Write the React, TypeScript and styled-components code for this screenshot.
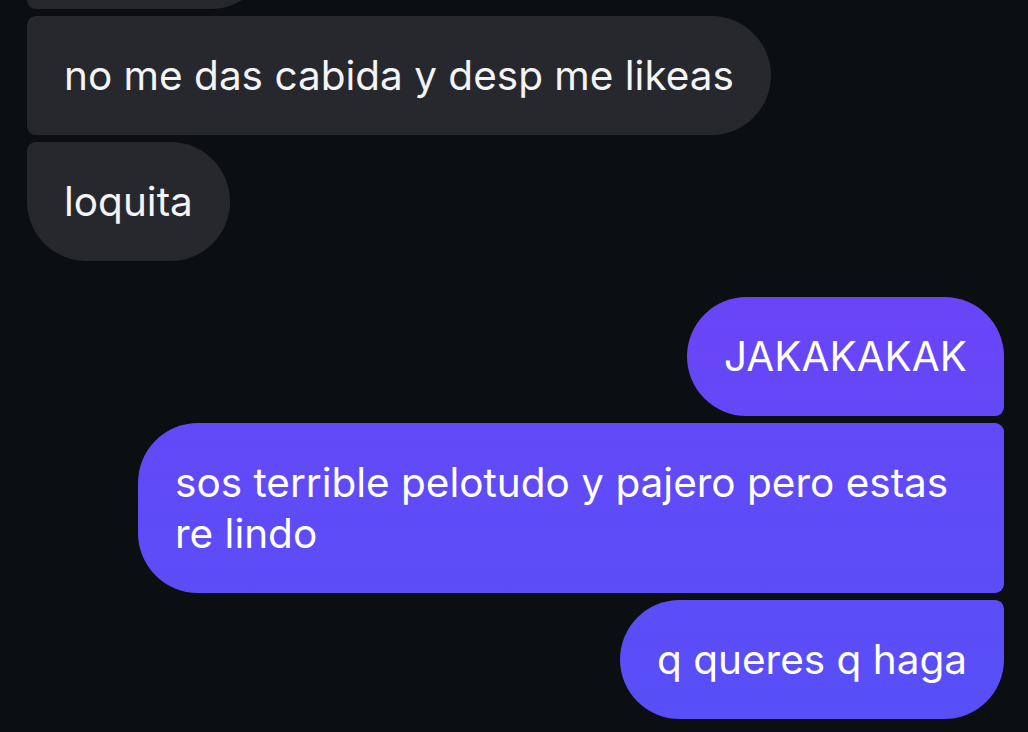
import React from 'react';
import styled, { createGlobalStyle, css } from 'styled-components';

const Global = createGlobalStyle`
  html, body {
    margin: 0;
    padding: 0;
    background: #0c0f12;
    overflow: hidden;
  }
  body {
    font-family: Inter, "Noto Sans", "Liberation Sans", sans-serif;
    -webkit-font-smoothing: antialiased;
  }
`;

const Screen = styled.div`
  width: 1028px;
  height: 732px;
  background: #0c0f12;
  overflow: hidden;
  box-sizing: border-box;
  padding: 0 24px 0 27px;
`;

const Thread = styled.div`
  display: flex;
  flex-direction: column;
  gap: 36px;
  margin-top: -110px;
`;

const Group = styled.div<{ $mine?: boolean }>`
  display: flex;
  flex-direction: column;
  align-items: ${(p) => (p.$mine ? 'flex-end' : 'flex-start')};
  gap: 7px;
`;

type Pos = 'first' | 'middle' | 'last';

const BIG = 60;
const SMALL = 9;

const Bubble = styled.div<{ $mine?: boolean; $pos: Pos; $w?: number; $h?: number }>`
  box-sizing: border-box;
  max-width: 866px;
  padding: 34px 37px 34px 37px;
  font-size: 40.5px;
  line-height: 51px;
  letter-spacing: 0px;
  color: #fff;
  ${(p) => p.$w && css`width: ${p.$w}px;`}
  ${(p) => p.$h && css`height: ${p.$h}px;`}
  ${(p) =>
    p.$mine
      ? css`
          background: linear-gradient(180deg, #6e41f9 0px, #6a45f8 300px, #5f4bf8 500px, #574ff7 732px);
          background-attachment: fixed;
          border-radius: ${BIG}px ${p.$pos === 'first' ? BIG : SMALL}px ${p.$pos === 'last' ? BIG : SMALL}px ${BIG}px;
        `
      : css`
          background: #26282d;
          color: #f4f4f5;
          border-radius: ${p.$pos === 'first' ? BIG : SMALL}px ${BIG}px ${BIG}px ${p.$pos === 'last' ? BIG : SMALL}px;
        `}
`;

export default function App() {
  return (
    <Screen>
      <Global />
      <Thread>
        <Group>
          {/* earlier message, scrolled off the top */}
          <Bubble $pos="middle" $w={243} $h={119} />
          <Bubble $pos="middle">no me das cabida y desp me likeas</Bubble>
          <Bubble $pos="last">loquita</Bubble>
        </Group>
        <Group $mine>
          <Bubble $mine $pos="first">JAKAKAKAK</Bubble>
          <Bubble $mine $pos="middle">sos terrible pelotudo y pajero pero estas re lindo</Bubble>
          <Bubble $mine $pos="last">q queres q haga</Bubble>
        </Group>
      </Thread>
    </Screen>
  );
}
